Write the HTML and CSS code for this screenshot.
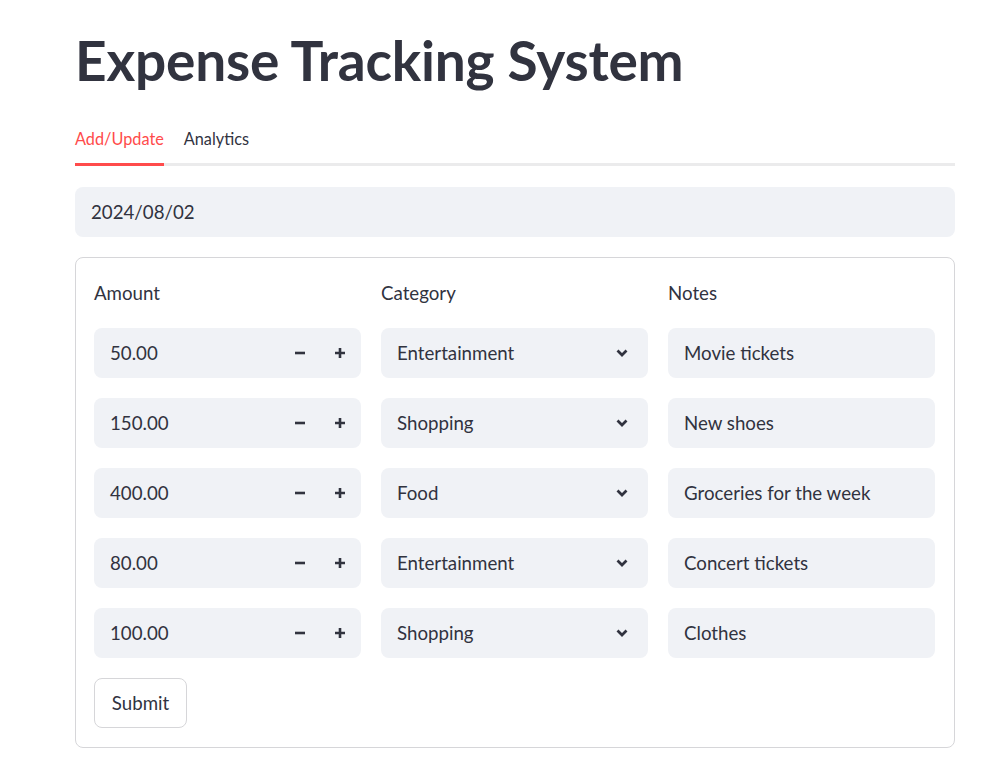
FILE: index.html
```html
<!DOCTYPE html>
<html lang="en">
<head>
<meta charset="utf-8">
<title>Expense Tracking System</title>
<link rel="stylesheet" href="styles.css">
</head>
<body>
<main class="page">
  <h1 class="title">Expense Tracking System</h1>
  <nav class="tabs">
    <div class="tab active">Add/Update</div>
    <div class="tab">Analytics</div>
  </nav>
  <div class="field date">2024/08/02</div>
  <form class="form">
    <div class="cols">
      <div class="col">
        <div class="label">Amount</div>
        <div class="field number"><span class="val">50.00</span><span class="step"><svg viewBox="0 0 12 12"><path d="M1 6h10"/></svg></span><span class="step"><svg viewBox="0 0 12 12"><path d="M1 6h10M6 1v10"/></svg></span></div>
        <div class="field number"><span class="val">150.00</span><span class="step"><svg viewBox="0 0 12 12"><path d="M1 6h10"/></svg></span><span class="step"><svg viewBox="0 0 12 12"><path d="M1 6h10M6 1v10"/></svg></span></div>
        <div class="field number"><span class="val">400.00</span><span class="step"><svg viewBox="0 0 12 12"><path d="M1 6h10"/></svg></span><span class="step"><svg viewBox="0 0 12 12"><path d="M1 6h10M6 1v10"/></svg></span></div>
        <div class="field number"><span class="val">80.00</span><span class="step"><svg viewBox="0 0 12 12"><path d="M1 6h10"/></svg></span><span class="step"><svg viewBox="0 0 12 12"><path d="M1 6h10M6 1v10"/></svg></span></div>
        <div class="field number"><span class="val">100.00</span><span class="step"><svg viewBox="0 0 12 12"><path d="M1 6h10"/></svg></span><span class="step"><svg viewBox="0 0 12 12"><path d="M1 6h10M6 1v10"/></svg></span></div>
      </div>
      <div class="col">
        <div class="label">Category</div>
        <div class="field select"><span class="val">Entertainment</span><svg class="chev" viewBox="0 0 12 8"><path d="M1.5 1.5L6 6l4.5-4.5"/></svg></div>
        <div class="field select"><span class="val">Shopping</span><svg class="chev" viewBox="0 0 12 8"><path d="M1.5 1.5L6 6l4.5-4.5"/></svg></div>
        <div class="field select"><span class="val">Food</span><svg class="chev" viewBox="0 0 12 8"><path d="M1.5 1.5L6 6l4.5-4.5"/></svg></div>
        <div class="field select"><span class="val">Entertainment</span><svg class="chev" viewBox="0 0 12 8"><path d="M1.5 1.5L6 6l4.5-4.5"/></svg></div>
        <div class="field select"><span class="val">Shopping</span><svg class="chev" viewBox="0 0 12 8"><path d="M1.5 1.5L6 6l4.5-4.5"/></svg></div>
      </div>
      <div class="col">
        <div class="label">Notes</div>
        <div class="field">Movie tickets</div>
        <div class="field">New shoes</div>
        <div class="field">Groceries for the week</div>
        <div class="field">Concert tickets</div>
        <div class="field">Clothes</div>
      </div>
    </div>
    <button type="button" class="submit">Submit</button>
  </form>
</main>
</body>
</html>
```
FILE: styles.css
```css
* { box-sizing: border-box; }
html, body { margin: 0; padding: 0; background: #ffffff; }
body {
  font-family: Lato, "Noto Sans", sans-serif;
  color: #31333f;
}
.page {
  width: 880px;
  margin-left: 75px;
  padding-top: 26px;
}
.title {
  margin: 0;
  font-size: 55px;
  line-height: 68px;
  font-weight: 700;
  letter-spacing: -0.2px;
}
.tabs {
  display: flex;
  gap: 20px;
  margin-top: 28px;
  border-bottom: 3px solid #ebebec;
}
.tab {
  font-size: 16.3px;
  line-height: 20px;
  padding: 7px 0 14px;
  margin-bottom: -3px;
  border-bottom: 3px solid transparent;
}
.tab.active {
  color: #ff4b4b;
  border-bottom-color: #ff4b4b;
}
.field {
  display: flex;
  align-items: center;
  height: 50px;
  padding-left: 16px;
  background: #f0f2f6;
  border-radius: 8px;
  font-size: 18.7px;
}
.date { margin-top: 21px; }
.form {
  margin: 20px 0 0;
  border: 1px solid #d6d6d9;
  border-radius: 8px;
  padding: 19px 19px 19px 18px;
}
.cols {
  display: grid;
  grid-template-columns: repeat(3, 1fr);
  column-gap: 20px;
}
.col {
  display: flex;
  flex-direction: column;
  gap: 20px;
}
.label {
  height: 31px;
  display: flex;
  align-items: center;
  font-size: 18.7px;
}
.val { flex: 1; }
.step {
  width: 40px;
  height: 100%;
  display: flex;
  align-items: center;
  justify-content: center;
}
.number { padding-right: 1px; }
.step svg {
  width: 12px;
  height: 12px;
  stroke: #31333f;
  stroke-width: 2.6;
  fill: none;
}
.select { padding-right: 20px; }
.chev {
  width: 12px;
  height: 8px;
  stroke: #31333f;
  stroke-width: 2.7;
  fill: none;
}
.submit {
  margin-top: 20px;
  height: 50px;
  width: 93px;
  background: #ffffff;
  border: 1px solid #d6d6d9;
  border-radius: 8px;
  font-family: inherit;
  font-size: 18.7px;
  color: #31333f;
  padding: 0;
}
```
